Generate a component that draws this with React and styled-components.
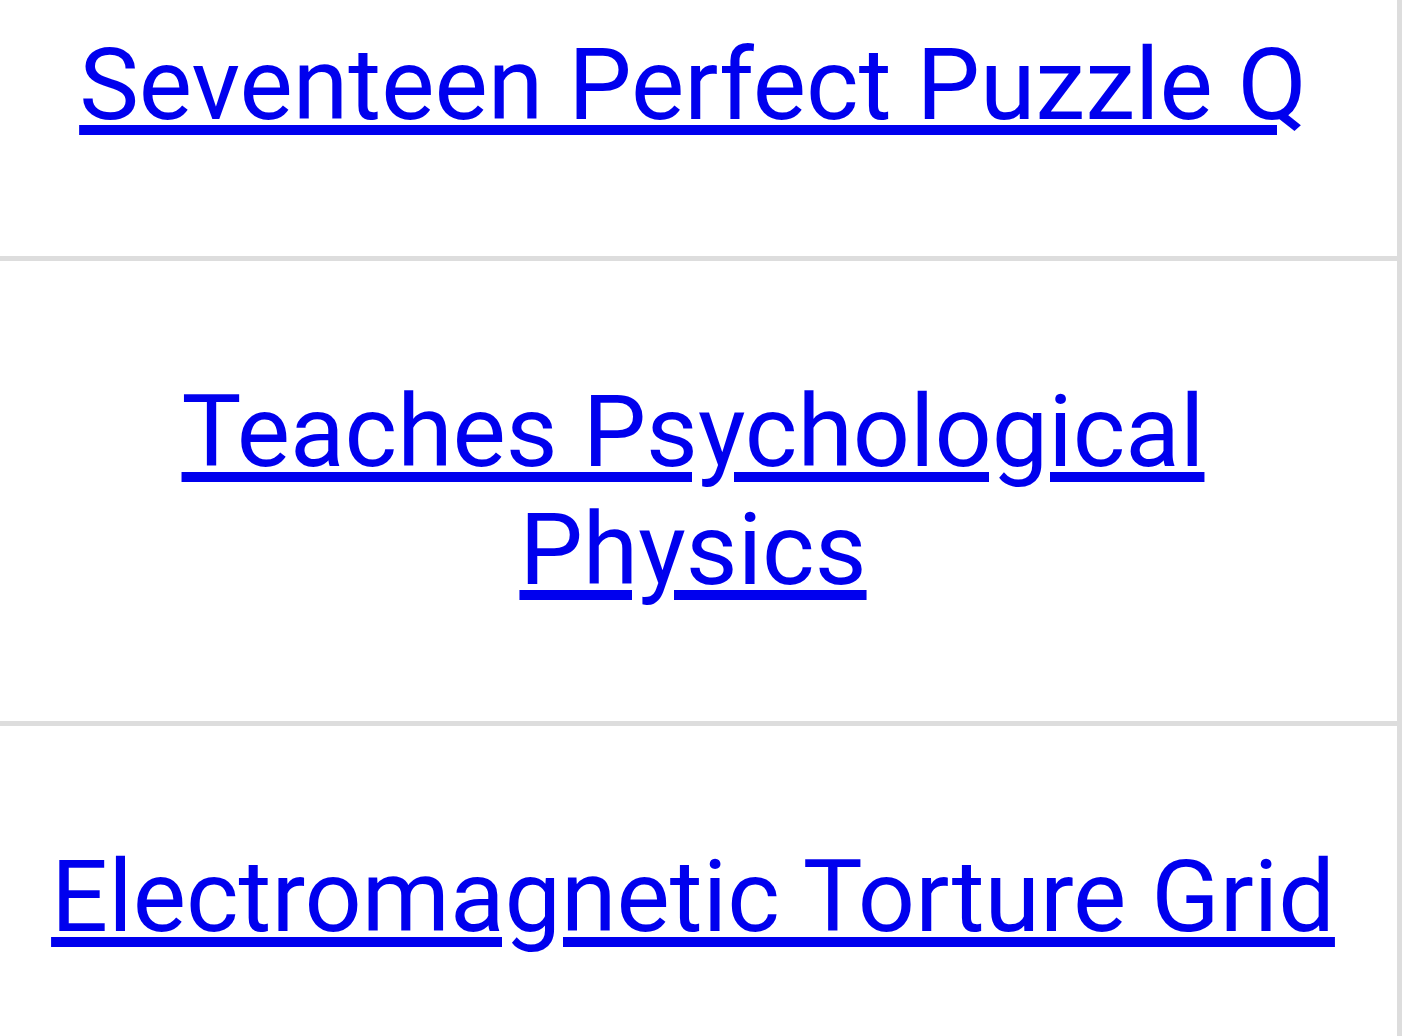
import React from 'react';
import styled, { createGlobalStyle } from 'styled-components';

const GlobalStyle = createGlobalStyle`
  html, body {
    margin: 0;
    padding: 0;
    background: #fff;
    overflow: hidden;
  }
  body {
    font-family: Roboto, "Liberation Sans", Arial, sans-serif;
  }
`;

const Table = styled.div`
  display: flex;
  flex-direction: column;
  width: 1408px;
  margin: -86px 0 0 -11px;
  border-right: 5px solid #dddddd;
`;

const Row = styled.div`
  display: flex;
  align-items: center;
  justify-content: center;
  padding: 112px 40px;
  border-bottom: 5px solid #dddddd;
  text-align: center;
`;

const Title = styled.a`
  font-size: 100.5px;
  line-height: normal;
  color: #0000ee;
  text-decoration: underline;
  cursor: pointer;
`;

const items = [
  'Seventeen Perfect Puzzle Q',
  'Teaches Psychological Physics',
  'Electromagnetic Torture Grid',
];

const App = () => (
  <>
    <GlobalStyle />
    <Table>
      {items.map((t) => (
        <Row key={t}>
          <Title href="#">{t}</Title>
        </Row>
      ))}
    </Table>
  </>
);

export default App;
